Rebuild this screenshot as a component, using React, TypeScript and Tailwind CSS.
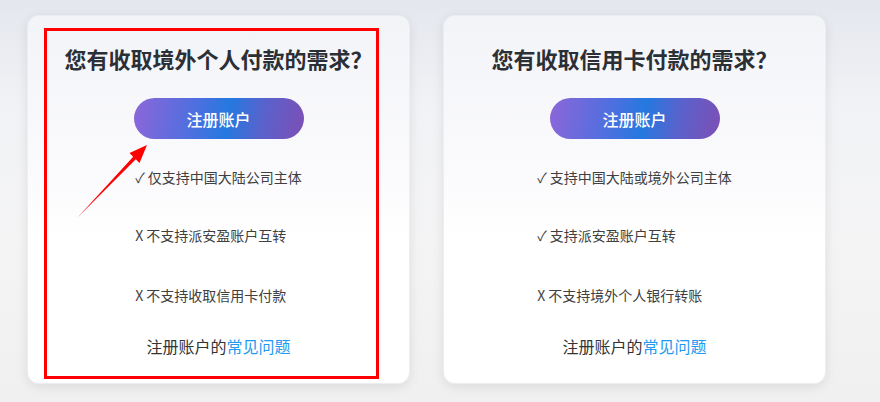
import React from 'react';

type Item = { ok: boolean; text: string };

interface PlanCardProps {
  title: string;
  items: Item[];
  highlighted?: boolean;
}

const font = { fontFamily: '"Noto Sans CJK SC", "Noto Sans", sans-serif' };

const PlanCard: React.FC<PlanCardProps> = ({ title, items, highlighted = false }) => {
  return (
    <div className="relative w-[383px] h-[369px] rounded-xl bg-[linear-gradient(180deg,#f3f4f8_0%,#fbfbfd_45%,#ffffff_60%)] shadow-[0_3px_12px_rgba(0,0,0,0.09)] border border-[#eceef2] flex flex-col items-center pt-[27px]">
      {/* Title */}
      <h2 className="text-[22px] leading-[30px] font-bold text-[#2b2f36]">{title}</h2>

      {/* Register button */}
      <button className="mt-[25px] w-[170px] h-[41px] rounded-full bg-[linear-gradient(100deg,#8d66d9_0%,#4f6fdf_35%,#2479e0_55%,#5a62cc_75%,#7d4fb4_100%)] text-white text-[16px] font-medium">
        注册账户
      </button>

      {/* Features */}
      <div className="mt-[28px] flex flex-col items-start text-[14px] leading-[20px] text-[#404040]">
        {items.map((item, i) => (
          <p key={i} className={i === 0 ? '' : i === 1 ? 'mt-[38px]' : 'mt-[40px]'}>
            <span className="text-[#444]">{item.ok ? '✓' : 'X'}</span> {item.text}
          </p>
        ))}
      </div>

      {/* FAQ */}
      <p className="mt-[29px] text-[16px] leading-[24px] text-[#333]">
        注册账户的<a className="text-[#1e9af0]">常见问题</a>
      </p>

      {/* Annotation box */}
      {highlighted && (
        <div className="absolute left-[16px] top-[12px] w-[335px] h-[351px] border-[3px] border-[#ff0000] pointer-events-none" />
      )}
    </div>
  );
};

export default function App() {
  return (
    <div
      className="relative w-[880px] h-[402px] overflow-hidden bg-[linear-gradient(180deg,#e4e7ee_0%,#f1f2f5_25%,#f4f4f5_60%,#f0f0f0_100%)]"
      style={font}
    >
      <div className="flex gap-[33px] pl-[27px] pt-[15px]">
        <PlanCard
          highlighted
          title="您有收取境外个人付款的需求？"
          items={[
            { ok: true, text: '仅支持中国大陆公司主体' },
            { ok: false, text: '不支持派安盈账户互转' },
            { ok: false, text: '不支持收取信用卡付款' },
          ]}
        />
        <PlanCard
          title="您有收取信用卡付款的需求？"
          items={[
            { ok: true, text: '支持中国大陆或境外公司主体' },
            { ok: true, text: '支持派安盈账户互转' },
            { ok: false, text: '不支持境外个人银行转账' },
          ]}
        />
      </div>

      {/* Red annotation arrow */}
      <svg className="absolute left-0 top-0 pointer-events-none" width="880" height="402">
        <polygon
          points="78,217 135.8,159.2 139.5,163 147,145 129.5,153 133.2,156.8"
          fill="#ff0000"
        />
      </svg>
    </div>
  );
}
